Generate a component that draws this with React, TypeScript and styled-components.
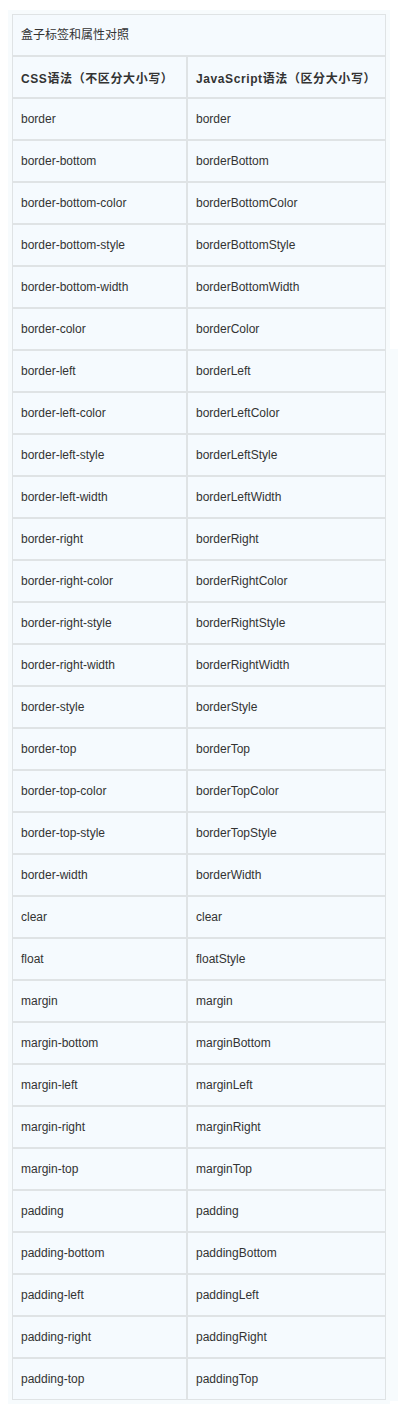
import React from 'react';
import styled, { createGlobalStyle } from 'styled-components';

const GlobalStyle = createGlobalStyle`
  body {
    margin: 0;
    background: #ffffff;
    font-family: 'Liberation Sans', Arial, 'Noto Sans CJK SC', sans-serif;
  }
`;

const Page = styled.div`
  display: flex;
  align-items: flex-start;
  padding: 10px 0 0 8px;
`;

const Frame = styled.div`
  background: #f7fbfd;
  padding: 4px;
  width: 374px;
`;

const SideStrip = styled.div`
  width: 8px;
  height: 1052px;
  margin-top: 339px;
  background: #f7fbfd;
`;

const Grid = styled.div`
  display: grid;
  grid-template-columns: 173px 1fr;
  gap: 2px;
  padding: 1px;
  background: #dfe3e5;
`;

interface CellProps {
  $wide?: boolean;
  $bold?: boolean;
}

const Cell = styled.div<CellProps>`
  grid-column: ${(props) => (props.$wide ? '1 / span 2' : 'auto')};
  display: flex;
  align-items: center;
  height: 40px;
  padding: ${(props) => (props.$wide ? '0 8px 3px' : '0 8px')};
  box-sizing: border-box;
  background: #f5fafe;
  color: #333333;
  font-size: 12px;
  font-weight: ${(props) => (props.$bold ? '700' : '400')};
  letter-spacing: ${(props) => (props.$bold ? '0.6px' : 'normal')};
  white-space: nowrap;
`;

const rows: [string, string][] = [
  ['border', 'border'],
  ['border-bottom', 'borderBottom'],
  ['border-bottom-color', 'borderBottomColor'],
  ['border-bottom-style', 'borderBottomStyle'],
  ['border-bottom-width', 'borderBottomWidth'],
  ['border-color', 'borderColor'],
  ['border-left', 'borderLeft'],
  ['border-left-color', 'borderLeftColor'],
  ['border-left-style', 'borderLeftStyle'],
  ['border-left-width', 'borderLeftWidth'],
  ['border-right', 'borderRight'],
  ['border-right-color', 'borderRightColor'],
  ['border-right-style', 'borderRightStyle'],
  ['border-right-width', 'borderRightWidth'],
  ['border-style', 'borderStyle'],
  ['border-top', 'borderTop'],
  ['border-top-color', 'borderTopColor'],
  ['border-top-style', 'borderTopStyle'],
  ['border-width', 'borderWidth'],
  ['clear', 'clear'],
  ['float', 'floatStyle'],
  ['margin', 'margin'],
  ['margin-bottom', 'marginBottom'],
  ['margin-left', 'marginLeft'],
  ['margin-right', 'marginRight'],
  ['margin-top', 'marginTop'],
  ['padding', 'padding'],
  ['padding-bottom', 'paddingBottom'],
  ['padding-left', 'paddingLeft'],
  ['padding-right', 'paddingRight'],
  ['padding-top', 'paddingTop'],
];

const App = () => {
  return (
    <>
      <GlobalStyle />
      <Page>
        <Frame>
          <Grid>
            <Cell $wide>盒子标签和属性对照</Cell>
            <Cell $bold>CSS语法（不区分大小写）</Cell>
            <Cell $bold>JavaScript语法（区分大小写）</Cell>
            {rows.map(([css, js]) => (
              <React.Fragment key={css}>
                <Cell>{css}</Cell>
                <Cell>{js}</Cell>
              </React.Fragment>
            ))}
          </Grid>
        </Frame>
        <SideStrip />
      </Page>
    </>
  );
};

export default App;
